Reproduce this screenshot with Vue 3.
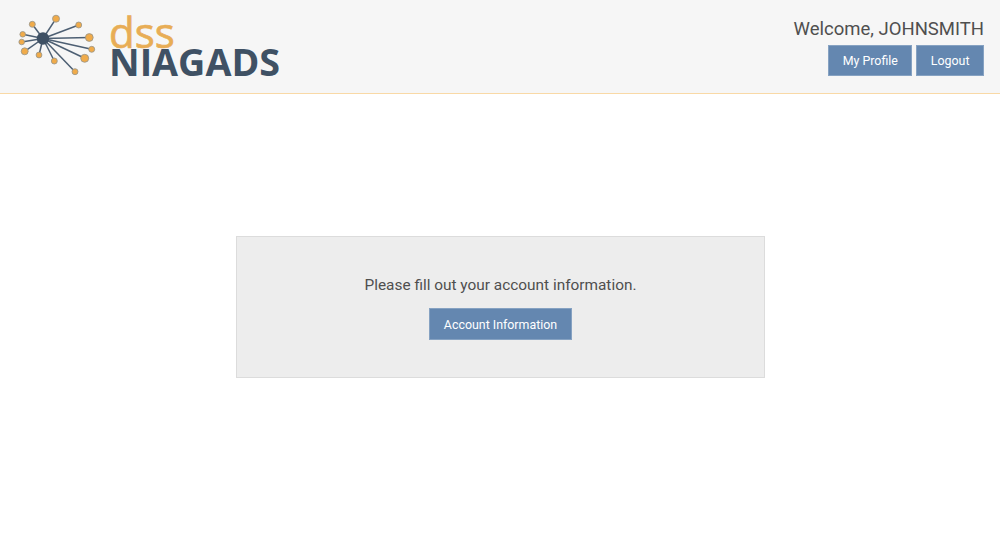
<script setup>
const center = { x: 43, y: 38.5 }
const nodes = [
  { x: 56, y: 18.7, r: 3.5 },
  { x: 32.3, y: 24.3, r: 3 },
  { x: 78.7, y: 25, r: 3 },
  { x: 22.7, y: 34.3, r: 2.8 },
  { x: 21.7, y: 42, r: 2.8 },
  { x: 89.3, y: 37.5, r: 3.9 },
  { x: 91.7, y: 49.3, r: 3 },
  { x: 84.7, y: 58.3, r: 4 },
  { x: 24.7, y: 51.3, r: 3.5 },
  { x: 39, y: 55, r: 2.9 },
  { x: 54.3, y: 61, r: 3 },
  { x: 75, y: 71.7, r: 3 }
]
</script>

<template>
  <div class="page">
    <header class="topbar">
      <div class="brand">
        <svg class="mark" width="100" height="93" viewBox="0 0 100 93">
          <line
            v-for="(n, i) in nodes"
            :key="'l' + i"
            :x1="center.x"
            :y1="center.y"
            :x2="n.x"
            :y2="n.y"
            stroke="#4d5f73"
            stroke-width="1.5"
          />
          <circle
            v-for="(n, i) in nodes"
            :key="'c' + i"
            :cx="n.x"
            :cy="n.y"
            :r="n.r"
            fill="#f0ab4a"
            stroke="#96948c"
            stroke-width="0.8"
          />
          <circle :cx="center.x" :cy="center.y" r="6.2" fill="#3e5064" />
        </svg>
        <div class="wordmark">
          <span class="dss">dss</span>
          <span class="niagads">NIAGADS</span>
        </div>
      </div>
      <div class="account">
        <div class="welcome">Welcome, JOHNSMITH</div>
        <div class="actions">
          <button class="btn small">My Profile</button>
          <button class="btn small">Logout</button>
        </div>
      </div>
    </header>

    <main class="content">
      <div class="panel">
        <p class="message">Please fill out your account information.</p>
        <button class="btn">Account Information</button>
      </div>
    </main>
  </div>
</template>

<style scoped>
.page {
  min-height: 552px;
  background: #fff;
  font-family: Roboto, "Liberation Sans", sans-serif;
  color: #4a4a4a;
}

.topbar {
  height: 93px;
  display: flex;
  justify-content: space-between;
  background: #f6f6f6;
  border-bottom: 1px solid #f9d9a6;
}

.brand {
  display: flex;
}

.mark {
  display: block;
  flex: none;
}

.wordmark {
  display: flex;
  flex-direction: column;
  margin-left: 9px;
  padding-top: 11px;
}

.dss {
  font-family: "Open Sans", sans-serif;
  font-size: 42px;
  line-height: 42px;
  height: 34px;
  color: #e8ad55;
  -webkit-text-stroke: 0.7px #e8ad55;
}

.niagads {
  font-family: "Open Sans", sans-serif;
  font-weight: 700;
  font-size: 37.7px;
  line-height: 34px;
  color: #3f5164;
}

.account {
  display: flex;
  flex-direction: column;
  align-items: flex-end;
  padding: 19px 16px 0 0;
}

.welcome {
  font-size: 18.5px;
  line-height: 21px;
  color: #4f4f4f;
}

.actions {
  display: flex;
  gap: 4px;
  margin-top: 5px;
}

.btn {
  height: 32px;
  padding: 0 13.5px;
  background: #6487b0;
  border: 1px solid #86a2c2;
  border-radius: 0;
  color: #fff;
  font-family: Roboto, "Liberation Sans", sans-serif;
  font-size: 12.4px;
  font-weight: 400;
}

.btn.small {
  height: 31px;
}

.content {
  display: flex;
  justify-content: center;
  padding: 142px 0 0 1px;
}

.panel {
  width: 529px;
  height: 142px;
  box-sizing: border-box;
  display: flex;
  flex-direction: column;
  align-items: center;
  background: #ededed;
  border: 1px solid #dcdcdc;
}

.message {
  margin: 39px 0 13px;
  font-size: 15.4px;
  line-height: 19px;
  color: #4f4f4f;
}
</style>
